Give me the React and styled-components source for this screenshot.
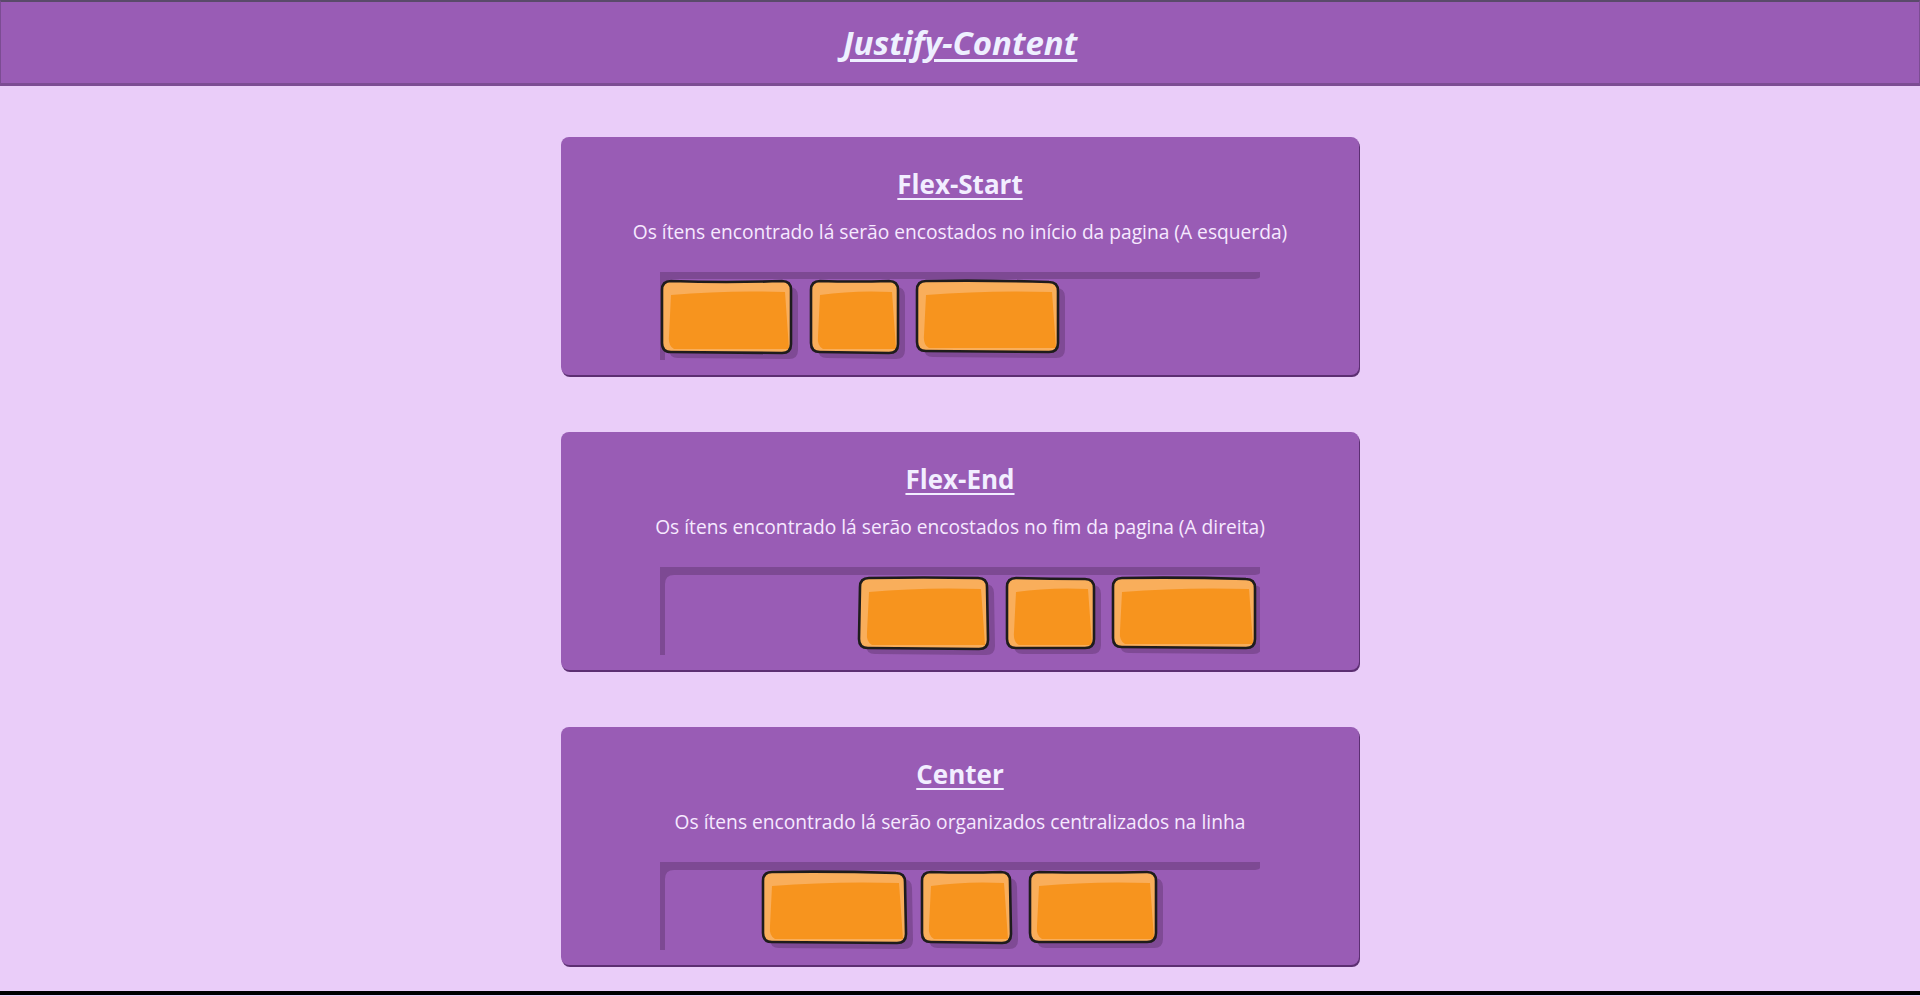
import React from "react"
import styled, { createGlobalStyle } from "styled-components"

const GlobalStyle = createGlobalStyle`
  html, body {
    margin: 0;
    padding: 0;
    background: #eacdf9;
    font-family: "Open Sans", "Lato", sans-serif;
  }
`

const Header = styled.header`
  height: 81px;
  display: flex;
  align-items: center;
  justify-content: center;
  background: #995cb5;
  border: 1px solid #7c4c93;
  border-top: 2px solid #5a4a6a;
  border-bottom: 3px solid #7c4c93;
`

const PageTitle = styled.h1`
  margin: 0;
  color: #eef0ff;
  font-size: 33px;
  font-style: italic;
  font-weight: 700;
  text-decoration: underline;
  text-underline-offset: 4px;
  text-decoration-thickness: 3px;
`

const Main = styled.main`
  display: flex;
  flex-direction: column;
  align-items: center;
  gap: 57px;
  padding: 51px 0 26px;
`

const Card = styled.section`
  box-sizing: border-box;
  width: 798px;
  padding: 32px 0 15px;
  display: flex;
  flex-direction: column;
  align-items: center;
  background: #995cb5;
  border-radius: 8px;
  box-shadow: 1px 2px 0 #5c2f72;
`

const CardTitle = styled.h2`
  margin: 0;
  height: 30px;
  line-height: 30px;
  color: #f2eeff;
  font-size: 26px;
  font-weight: 700;
  text-decoration: underline;
  text-underline-offset: 4px;
  text-decoration-thickness: 2px;
`

const CardText = styled.p`
  margin: 21px 0 29px;
  height: 23px;
  line-height: 23px;
  color: #f6e9ff;
  font-size: 19.2px;
`

const Footer = styled.footer`
  border-top: 4px solid #000;
  height: 40px;
`

const sketch = (x, y, w, h, r, d = [0, 0, 0, 0, 0, 0, 0]) => {
  const [trx, try_, brx, bry, blx, bly, bow] = d
  const tr = [x + w + trx, y + try_]
  const br = [x + w + brx, y + h + bry]
  const bl = [x + blx, y + h + bly]
  return [
    `M${x + r},${y}`,
    `Q${x + w / 2},${y + bow} ${tr[0] - r},${tr[1]}`,
    `Q${tr[0]},${tr[1]} ${tr[0]},${tr[1] + r}`,
    `L${br[0]},${br[1] - r}`,
    `Q${br[0]},${br[1]} ${br[0] - r},${br[1]}`,
    `L${bl[0] + r},${bl[1]}`,
    `Q${bl[0]},${bl[1]} ${bl[0]},${bl[1] - r}`,
    `L${x},${y + r}`,
    `Q${x},${y} ${x + r},${y}`,
    "Z",
  ].join(" ")
}

const Box = ({ x, y, w, h, d }) => (
  <g>
    <path d={sketch(x + 7, y + 6, w, h, 9, d)} fill="#7a468f" opacity="0.85" />
    <path d={sketch(x, y, w, h, 9, d)} fill="#f9ae5b" />
    <path
      d={`M${x + 9},${y + 14} Q${x + w / 2},${y + 9} ${x + w - 6},${y + 11}
        L${x + w - 2},${y + h - 3} L${x + 12},${y + h - 3}
        Q${x + 6},${y + h - 6} ${x + 7},${y + h - 16} Z`}
      fill="#f7941e"
    />
    <path
      d={sketch(x, y, w, h, 9, d)}
      fill="none"
      stroke="#1e1c1c"
      strokeWidth="2.6"
      strokeLinejoin="round"
    />
  </g>
)

const Frame = ({ top }) => (
  <path
    d={`M0,0 H600 V${top - 2} Q599,${top} 592,${top} H14 Q5,${top} 5,${top + 9} V88 H0 Z`}
    fill="#7a478f"
    opacity="0.9"
  />
)

const layouts = {
  start: {
    top: 7,
    boxes: [
      { x: 2, y: 9, w: 129, h: 71, d: [0, 0, 0, 1, 0, 0, 2] },
      { x: 151, y: 9, w: 87, h: 71, d: [0, 0, 0, 1, 0, 0, 1] },
      { x: 257, y: 9, w: 141, h: 70, d: [0, 1, 0, 1, 0, 0, -1] },
    ],
  },
  end: {
    top: 8,
    boxes: [
      { x: 200, y: 11, w: 127, h: 70, d: [0, 0, 1, 1, -1, 0, -1] },
      { x: 347, y: 11, w: 87, h: 70, d: [0, 1, 0, 0, 0, 0, 1] },
      { x: 453, y: 11, w: 142, h: 69, d: [0, 1, 0, 1, 0, 0, -1] },
    ],
  },
  center: {
    top: 8,
    boxes: [
      { x: 103, y: 10, w: 142, h: 70, d: [0, 1, 1, 1, 0, 0, -1] },
      { x: 262, y: 10, w: 88, h: 70, d: [0, 0, 1, 1, 0, 0, 1] },
      { x: 370, y: 10, w: 126, h: 70, d: [0, 0, 0, 0, 0, 0, 1] },
    ],
  },
}

const DemoSvg = styled.svg`
  display: block;
  width: 600px;
  height: 88px;
`

const FlexDemo = ({ variant }) => {
  const { top, boxes } = layouts[variant]
  return (
    <DemoSvg viewBox="0 0 600 88">
      <Frame top={top} />
      {boxes.map((b, i) => (
        <Box key={i} {...b} />
      ))}
    </DemoSvg>
  )
}

const sections = [
  {
    title: "Flex-Start",
    text: "Os ítens encontrado lá serão encostados no início da pagina (A esquerda)",
    variant: "start",
  },
  {
    title: "Flex-End",
    text: "Os ítens encontrado lá serão encostados no fim da pagina (A direita)",
    variant: "end",
  },
  {
    title: "Center",
    text: "Os ítens encontrado lá serão organizados centralizados na linha",
    variant: "center",
  },
]

export default () => (
  <>
    <GlobalStyle />
    <Header>
      <PageTitle>Justify-Content</PageTitle>
    </Header>
    <Main>
      {sections.map(({ title, text, variant }) => (
        <Card key={variant}>
          <CardTitle>{title}</CardTitle>
          <CardText>{text}</CardText>
          <FlexDemo variant={variant} />
        </Card>
      ))}
    </Main>
    <Footer />
  </>
)
